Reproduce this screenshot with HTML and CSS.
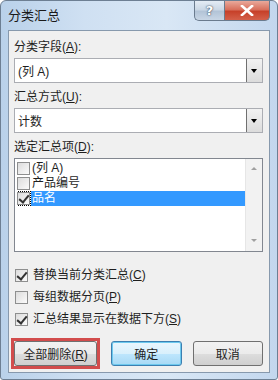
FILE: index.html
```html
<!DOCTYPE html>
<html lang="zh">
<head>
    <meta charset="UTF-8">
    <title>分类汇总</title>
    <link rel="stylesheet" href="styles.css">
</head>
<body>
    <div class="window">
        <div class="titlebar">
            <span class="title">分类汇总</span>
            <div class="caption-buttons">
                <span class="btn-help">?</span>
                <span class="btn-close">
                    <svg width="14" height="11" viewBox="0 0 14 11">
                        <path d="M2 1 L12 10 M12 1 L2 10" stroke="#fff" stroke-width="2.6" stroke-linecap="square"/>
                    </svg>
                </span>
            </div>
        </div>
        <div class="client">
            <div class="label">分类字段(<u>A</u>):</div>
            <div class="combo">
                <span class="combo-text">(列 A)</span>
                <span class="combo-arrow"></span>
            </div>

            <div class="label">汇总方式(<u>U</u>):</div>
            <div class="combo">
                <span class="combo-text">计数</span>
                <span class="combo-arrow"></span>
            </div>

            <div class="label">选定汇总项(<u>D</u>):</div>
            <div class="listbox">
                <div class="items">
                    <div class="item"><span class="check"></span><span class="item-text">(列 A)</span></div>
                    <div class="item"><span class="check"></span><span class="item-text">产品编号</span></div>
                    <div class="item selected"><span class="check checked focus"></span><span class="item-text">品名</span></div>
                </div>
                <div class="scrollbar">
                    <span class="arrow up"></span>
                    <span class="arrow down"></span>
                </div>
            </div>

            <div class="options">
                <div class="option"><span class="check checked"></span><span>替换当前分类汇总(<u>C</u>)</span></div>
                <div class="option"><span class="check"></span><span>每组数据分页(<u>P</u>)</span></div>
                <div class="option"><span class="check checked"></span><span>汇总结果显示在数据下方(<u>S</u>)</span></div>
            </div>

            <div class="buttons">
                <div class="highlight"><button>全部删除(<u>R</u>)</button></div>
                <button class="default">确定</button>
                <button>取消</button>
            </div>
        </div>
    </div>
</body>
</html>
```

FILE: styles.css
```css
* {
    margin: 0;
    padding: 0;
    box-sizing: border-box;
}

body {
    width: 278px;
    height: 380px;
    background: #fff;
    font-family: "Liberation Sans", "Noto Sans CJK SC", sans-serif;
    font-size: 12px;
    color: #1e1e1e;
    overflow: hidden;
}

.window {
    width: 278px;
    height: 380px;
    border: 1px solid #6d7f93;
    border-radius: 6px 6px 3px 3px;
    background: linear-gradient(90deg, #b9d1ea 0%, #cfe0f2 30%, #d9e7f5 60%, #c3d7ee 100%);
    padding: 0 7px 6px 7px;
    display: flex;
    flex-direction: column;
}

.titlebar {
    height: 29px;
    display: flex;
    justify-content: space-between;
    align-items: flex-start;
}

.title {
    margin-top: 7px;
    font-size: 13px;
    line-height: 16px;
    color: #1a1a1a;
}

.caption-buttons {
    display: flex;
}

.btn-help,
.btn-close {
    height: 20px;
    display: flex;
    align-items: center;
    justify-content: center;
    border: 1px solid #6a7b8e;
    border-top: none;
}

.btn-help {
    width: 30px;
    border-radius: 0 0 0 5px;
    border-right: none;
    background: linear-gradient(#e4ecf5 0%, #cbd8e6 45%, #b3c4d7 55%, #c8d6e5 100%);
    font-family: "DejaVu Sans", sans-serif;
    font-weight: bold;
    font-size: 13px;
    color: #fff;
    text-shadow: 0 0 2px #3d4e63, 0 0 1px #3d4e63;
}

.btn-close {
    width: 46px;
    border-radius: 0 0 5px 0;
    background: linear-gradient(#e9a99b 0%, #d8705d 45%, #c7412a 55%, #d4604a 100%);
}

.client {
    flex: 1;
    background: #f0f0f0;
    border: 1px solid #8799ad;
    padding: 8px 6px 0 5px;
    display: flex;
    flex-direction: column;
}

.label {
    line-height: 17px;
    height: 17px;
}

.combo {
    height: 25px;
    margin: 2px 0 6px 0;
    border: 1px solid #abadb3;
    background: #fff;
    display: flex;
    align-items: center;
}

.combo-text {
    flex: 1;
    padding-left: 3px;
}

.combo-arrow {
    width: 16px;
    height: 23px;
    border-left: 1px solid #707070;
    background: linear-gradient(#f2f2f2, #dcdcdc);
    position: relative;
}

.combo-arrow::after,
.arrow::after {
    content: "";
    position: absolute;
    left: 4px;
    top: 10px;
    border-left: 3.5px solid transparent;
    border-right: 3.5px solid transparent;
    border-top: 4px solid #000;
}

.listbox {
    height: 94px;
    margin-top: 2px;
    border: 1px solid #828790;
    background: #fff;
    display: flex;
}

.items {
    flex: 1;
    padding-top: 2px;
    padding-left: 2px;
}

.item {
    height: 15px;
    line-height: 15px;
    display: flex;
    align-items: center;
    gap: 1px;
    overflow: hidden;
}

.item-text {
    padding: 0 1px;
    height: 15px;
    line-height: 15px;
}

.item.selected .item-text {
    flex: 1;
    background: #3399ff;
    color: #fff;
}

.check {
    width: 13px;
    height: 13px;
    border: 1px solid #8e8f8f;
    background: linear-gradient(135deg, #dcdcdc, #fbfbfb);
    position: relative;
    flex: none;
}

.check.checked::after {
    content: "";
    position: absolute;
    left: 3px;
    top: 0px;
    width: 4px;
    height: 8px;
    border-right: 2px solid #333;
    border-bottom: 2px solid #333;
    transform: rotate(40deg);
}

.check.focus {
    outline: 1px dotted #000;
}

.scrollbar {
    width: 17px;
    background: #f2f2f2;
    border-left: 1px solid #e6e6e6;
    position: relative;
}

.arrow {
    position: absolute;
    left: 1px;
    width: 15px;
    height: 15px;
}

.arrow.up {
    top: 2px;
}

.arrow.down {
    bottom: 3px;
}

.arrow.up::after {
    border-top: none;
    border-bottom: 3px solid #a0a0a0;
    top: 6px;
}

.arrow.down::after {
    border-top: 3px solid #a0a0a0;
    top: 6px;
}

.options {
    margin-top: 16px;
    padding-left: 1px;
    display: flex;
    flex-direction: column;
    gap: 7px;
}

.option {
    height: 15px;
    line-height: 15px;
    display: flex;
    align-items: center;
    gap: 5px;
}

.buttons {
    margin-top: 11px;
    display: flex;
    align-items: center;
    gap: 11px;
}

.highlight {
    border: 3px solid #d24c4c;
    margin-left: -3px;
}

button {
    width: 72px;
    height: 25px;
    font-family: inherit;
    font-size: 12px;
    color: #1e1e1e;
    border: 1px solid #707070;
    border-radius: 3px;
    background: linear-gradient(#f2f2f2 0%, #ebebeb 50%, #dddddd 51%, #cfcfcf 100%);
}

.highlight button {
    width: 83px;
}

button.default {
    border-color: #3c7fb1;
    box-shadow: inset 0 0 0 1px #6dc9ee;
    background: linear-gradient(#eaf6fd 0%, #d9f0fc 50%, #bee6fd 51%, #a7d9f5 100%);
}
```
